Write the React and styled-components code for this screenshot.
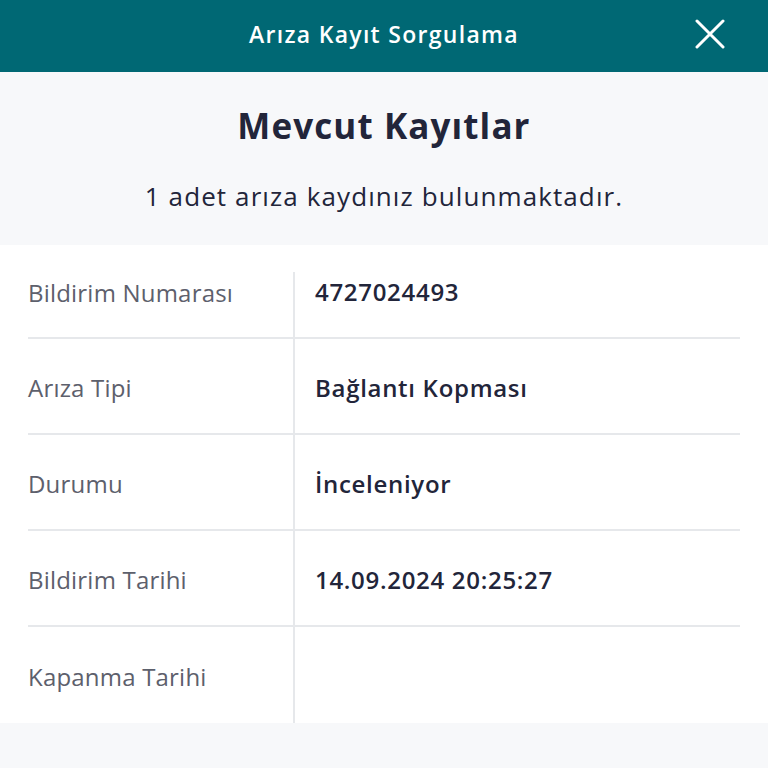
import React from "react";
import styled, { createGlobalStyle } from "styled-components";

const GlobalStyle = createGlobalStyle`
  html, body {
    margin: 0;
    padding: 0;
    background: #f7f8fa;
  }
  body {
    font-family: "Open Sans", "Noto Sans", "Liberation Sans", sans-serif;
    color: #22253a;
  }
`;

const records = [
  { label: "Bildirim Numarası", value: "4727024493" },
  { label: "Arıza Tipi", value: "Bağlantı Kopması" },
  { label: "Durumu", value: "İnceleniyor" },
  { label: "Bildirim Tarihi", value: "14.09.2024 20:25:27" },
  { label: "Kapanma Tarihi", value: "" },
];

const App = () => {
  return (
    <Wrapper>
      <GlobalStyle />
      <Header>
        <HeaderTitle>Arıza Kayıt Sorgulama</HeaderTitle>
        <CloseButton aria-label="Kapat">
          <svg width="30" height="30" viewBox="0 0 30 30">
            <path
              d="M2 2 L28 28 M28 2 L2 28"
              stroke="#fff"
              strokeWidth="3"
              strokeLinecap="round"
            />
          </svg>
        </CloseButton>
      </Header>
      <Intro>
        <Title>Mevcut Kayıtlar</Title>
        <Subtitle>1 adet arıza kaydınız bulunmaktadır.</Subtitle>
      </Intro>
      <Card>
        {records.map((item, index) => (
          <Row key={item.label} first={index === 0} last={index === records.length - 1}>
            <Label>{item.label}</Label>
            <Value first={index === 0}>{item.value}</Value>
          </Row>
        ))}
      </Card>
    </Wrapper>
  );
};

const Wrapper = styled.main`
  width: 768px;
  height: 768px;
  overflow: hidden;
  background: #f7f8fa;
`;

const Header = styled.header`
  position: relative;
  height: 72px;
  background: #006874;
  display: flex;
  align-items: center;
  justify-content: center;
`;

const HeaderTitle = styled.h1`
  margin: 0 0 4px;
  color: #ffffff;
  font-size: 23px;
  font-weight: 600;
  letter-spacing: 1.3px;
`;

const CloseButton = styled.button`
  position: absolute;
  right: 43px;
  top: 19px;
  width: 30px;
  height: 30px;
  padding: 0;
  border: none;
  background: none;
  display: flex;
`;

const Intro = styled.section`
  display: flex;
  flex-direction: column;
  align-items: center;
  height: 173px;
  box-sizing: border-box;
  padding-top: 30px;
`;

const Title = styled.h2`
  margin: 0;
  font-size: 35px;
  line-height: 48px;
  font-weight: 700;
  letter-spacing: 1.1px;
  color: #22253a;
`;

const Subtitle = styled.p`
  margin: 29px 0 0;
  font-size: 26px;
  line-height: 34px;
  font-weight: 400;
  letter-spacing: 1.1px;
  color: #22253a;
`;

const Card = styled.section`
  background: #ffffff;
  padding: 0 28px;
`;

const Row = styled.div`
  display: grid;
  grid-template-columns: 265px 1fr;
  height: ${(p) => (p.first ? "94px" : "96px")};
  border-bottom: ${(p) => (p.last ? "none" : "2px solid #e6e8eb")};
  box-sizing: border-box;
`;

const Label = styled.div`
  display: flex;
  align-items: center;
  padding-top: 2px;
  font-size: 24px;
  letter-spacing: 0.2px;
  color: #5d606c;
`;

const Value = styled.div`
  display: flex;
  align-items: center;
  margin-top: ${(p) => (p.first ? "27px" : "0")};
  padding-bottom: ${(p) => (p.first ? "29px" : "0")};
  padding-top: 2px;
  padding-left: 20px;
  border-left: 2px solid #e6e8eb;
  font-size: 24px;
  font-weight: 600;
  letter-spacing: 0.7px;
  color: #22253a;
`;

export default App;
